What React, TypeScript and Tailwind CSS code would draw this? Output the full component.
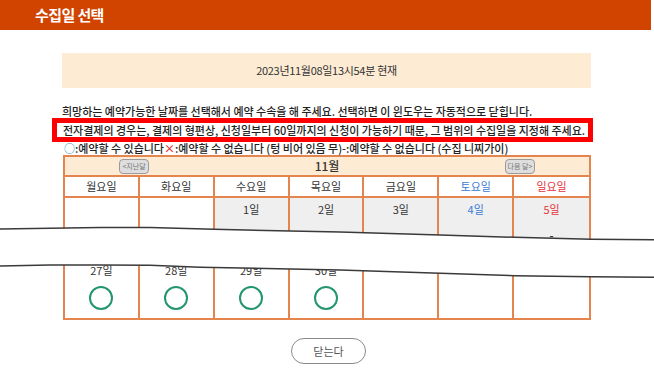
import React from 'react';

const weekdays = [
  { label: '월요일', color: 'text-[#333]' },
  { label: '화요일', color: 'text-[#333]' },
  { label: '수요일', color: 'text-[#333]' },
  { label: '목요일', color: 'text-[#333]' },
  { label: '금요일', color: 'text-[#333]' },
  { label: '토요일', color: 'text-[#3a7bd5]' },
  { label: '일요일', color: 'text-[#e5333b]' },
];

// first week (row above the cut)
const firstWeek: (number | null)[] = [null, null, 1, 2, 3, 4, 5];
// last week (row below the cut)
const lastWeek: (number | null)[] = [27, 28, 29, 30, null, null, null];

const dayColor = (i: number) =>
  i === 5 ? 'text-[#3a7bd5]' : i === 6 ? 'text-[#e5333b]' : 'text-[#333]';

// torn-paper cut over the calendar
const topCut: [number, number][] = [
  [0, 229], [50, 228.3], [100, 227.6], [150, 227.4], [214, 229.3], [290, 231],
  [340, 232], [440, 235], [515, 237.3], [591, 239.3], [654, 239.7],
];
const bottomCut: [number, number][] = [
  [0, 266], [50, 265], [100, 265], [150, 265.3], [200, 267.3], [290, 269],
  [340, 270], [440, 273.3], [515, 275.7], [591, 276.7], [654, 277.3],
];

const toPath = (pts: [number, number][]) =>
  pts.map(([x, y], i) => `${i === 0 ? 'M' : 'L'}${x} ${y}`).join(' ');

function CutOverlay() {
  const fill =
    toPath(topCut) +
    ' ' +
    [...bottomCut].reverse().map(([x, y]) => `L${x} ${y}`).join(' ') +
    ' Z';
  return (
    <svg
      className="absolute left-0 top-0 pointer-events-none"
      width={654}
      height={382}
      viewBox="0 0 654 382"
      aria-hidden="true"
    >
      <path d={fill} fill="#fff" />
      <path d={toPath(topCut)} fill="none" stroke="#3a3a3a" strokeWidth={1.5} />
      <path d={toPath(bottomCut)} fill="none" stroke="#3a3a3a" strokeWidth={1.5} />
    </svg>
  );
}

function MonthButton({ children }: { children: React.ReactNode }) {
  return (
    <button className="h-[15px] w-[30px] rounded-[4px] border-[1.5px] border-[#9a9a9a] bg-[#dedede] text-[7px] leading-none text-[#777] flex items-center justify-center">
      {children}
    </button>
  );
}

export default function App() {
  return (
    <div className="relative w-[654px] h-[382px] overflow-hidden bg-white text-[#333] font-['Noto_Sans_CJK_KR',sans-serif]">
      {/* Title bar */}
      <header className="w-[651px] h-[30px] bg-[#d14400] flex items-center pl-[35px]">
        <h1 className="text-white text-[15px] font-bold tracking-[-0.6px]">수집일 선택</h1>
      </header>

      <main className="ml-[62px] w-[529px] pt-[23px]">
        {/* Current time */}
        <div className="h-[35px] bg-[#fdebd3] flex items-center justify-center text-[11px] tracking-[-0.3px]">
          2023년11월08일13시54분 현재
        </div>

        {/* Notes */}
        <div className="mt-[16px] text-[11px] tracking-[-0.02px] font-medium text-[#222]">
          <p className="h-[14px] leading-[14px] whitespace-nowrap">
            희망하는 예약가능한 날짜를 선택해서 예약 수속을 해 주세요. 선택하면 이 윈도우는 자동적으로 닫힙니다.
          </p>
          <p className="-ml-[10px] w-[541px] h-[24px] border-[5px] border-[#ff0000] pl-[6px] leading-[14px] whitespace-nowrap">
            전자결제의 경우는, 결제의 형편상, 신청일부터 60일까지의 신청이 가능하기 때문, 그 범위의 수집일을 지정해 주세요.
          </p>
          <p className="h-[13px] leading-[13px] pl-[2px] whitespace-nowrap">
            <span className="text-[#3a9ab8]">○</span>:예약할 수 있습니다<span className="text-[#e8202a]">×</span>:예약할 수 없습니다 (텅 비어 있음 무)-:예약할 수 없습니다 (수집 니찌가이)
          </p>
        </div>

        {/* Calendar */}
        <div className="ml-[1px] w-[528px] border-2 border-[#e4844f] text-[11px]">
          <div className="h-[20px] bg-[#fdebd3] border-b-2 border-[#e4844f] flex items-center justify-between px-[54px]">
            <MonthButton>&lt;지난달</MonthButton>
            <span className="font-medium text-[12px]">11월</span>
            <MonthButton>다음 달&gt;</MonthButton>
          </div>
          <div className="grid grid-cols-7 border-b-2 border-[#e4844f]">
            {weekdays.map((w, i) => (
              <div
                key={w.label}
                className={`h-[19px] flex items-center justify-center ${w.color} ${i < 6 ? 'border-r-2 border-[#e4844f]' : ''}`}
              >
                {w.label}
              </div>
            ))}
          </div>
          <div className="grid grid-cols-7 border-b-2 border-[#e4844f]">
            {firstWeek.map((d, i) => (
              <div
                key={i}
                className={`h-[59px] flex flex-col items-center ${d ? 'bg-[#efefef]' : 'bg-white'} ${i < 6 ? 'border-r-2 border-[#e4844f]' : ''}`}
              >
                {d && (
                  <>
                    <span className={`mt-[4px] leading-[14px] ${dayColor(i)}`}>{d}일</span>
                    <span className="mt-[14px] font-bold leading-[10px]">-</span>
                  </>
                )}
              </div>
            ))}
          </div>
          <div className="grid grid-cols-7">
            {lastWeek.map((d, i) => (
              <div
                key={i}
                className={`h-[59px] flex flex-col items-center ${i < 6 ? 'border-r-2 border-[#e4844f]' : ''}`}
              >
                {d && (
                  <>
                    <span className={`mt-[4px] leading-[14px] ${dayColor(i)}`}>{d}일</span>
                    <span className="mt-[9px] w-[24px] h-[24px] rounded-full border-2 border-[#23966e]" />
                  </>
                )}
              </div>
            ))}
          </div>
        </div>

        {/* Close */}
        <div className="mt-[18px] flex justify-center pl-[4px]">
          <button className="w-[75px] h-[26px] rounded-full border border-[#8a8a8a] bg-white text-[11px] text-[#555]">
            닫는다
          </button>
        </div>
      </main>

      <CutOverlay />
    </div>
  );
}
